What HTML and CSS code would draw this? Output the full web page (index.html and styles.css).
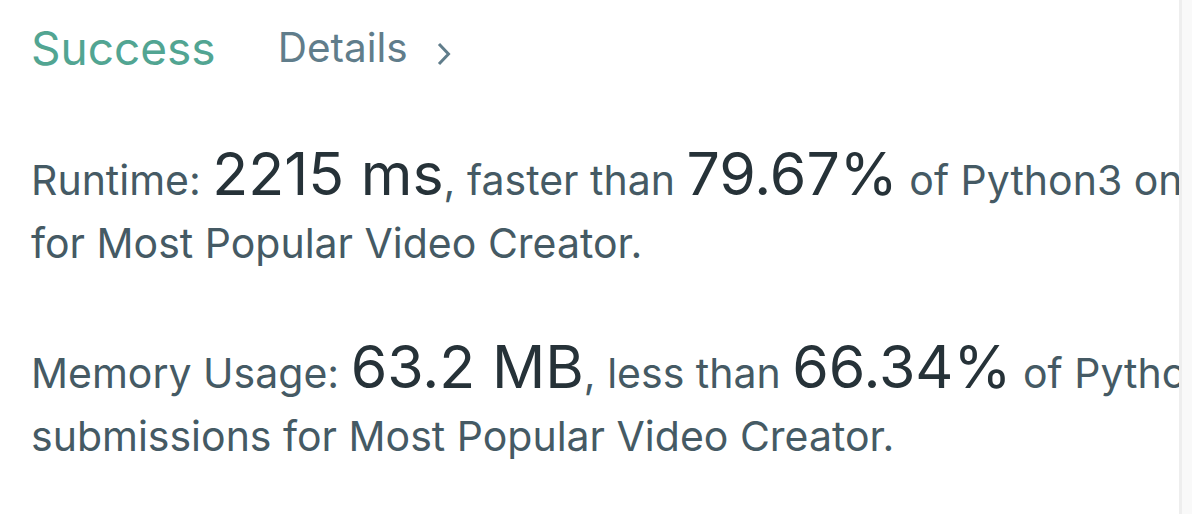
FILE: index.html
```html
<!DOCTYPE html>
<html>
<head>
<meta charset="utf-8">
<link rel="stylesheet" href="styles.css">
</head>
<body>
<div class="frame">
  <div class="panel">
    <div class="header">
      <span class="status">Success</span>
      <a class="details">Details
        <svg class="chev" width="16" height="24" viewBox="0 0 16 24"><path d="M3 2 L12.5 12 L3 22" fill="none" stroke="#607d8b" stroke-width="3"/></svg>
      </a>
    </div>
    <p class="stat">Runtime: <span class="big">2215 ms</span>, faster than <span class="big">79.67%</span> of Python3 online submissions<br>for Most Popular Video Creator.</p>
    <p class="stat">Memory Usage: <span class="big">63.2 MB</span>, less than <span class="big">66.34%</span> of Python3 online<br>submissions for Most Popular Video Creator.</p>
  </div>
  <div class="scrollbar"></div>
</div>
</body>
</html>
```
FILE: styles.css
```css
html, body {
  margin: 0;
  padding: 0;
  background: #ffffff;
}
body {
  font-family: Inter, "Liberation Sans", sans-serif;
}
.frame {
  display: flex;
  width: 1192px;
  height: 514px;
}
.panel {
  flex: 1;
  overflow: hidden;
  padding: 20px 0 0 31px;
  white-space: nowrap;
}
.scrollbar {
  width: 10px;
  border-left: 3px solid #eeeeee;
  background: #f9f9f9;
}
.header {
  display: flex;
  align-items: center;
  height: 56px;
}
.status {
  color: #52a592;
  font-size: 46px;
  line-height: 56px;
}
.details {
  display: flex;
  align-items: center;
  margin-left: 62px;
  color: #607d8b;
  font-size: 40.5px;
  line-height: 56px;
}
.chev {
  margin-left: 28px;
  margin-top: 12px;
}
.stat {
  margin: 66px 0 0;
  color: #455a64;
  font-size: 41px;
  line-height: 63px;
}
.stat + .stat {
  margin-top: 60px;
}
.big {
  color: #263238;
  font-size: 59px;
}
```
